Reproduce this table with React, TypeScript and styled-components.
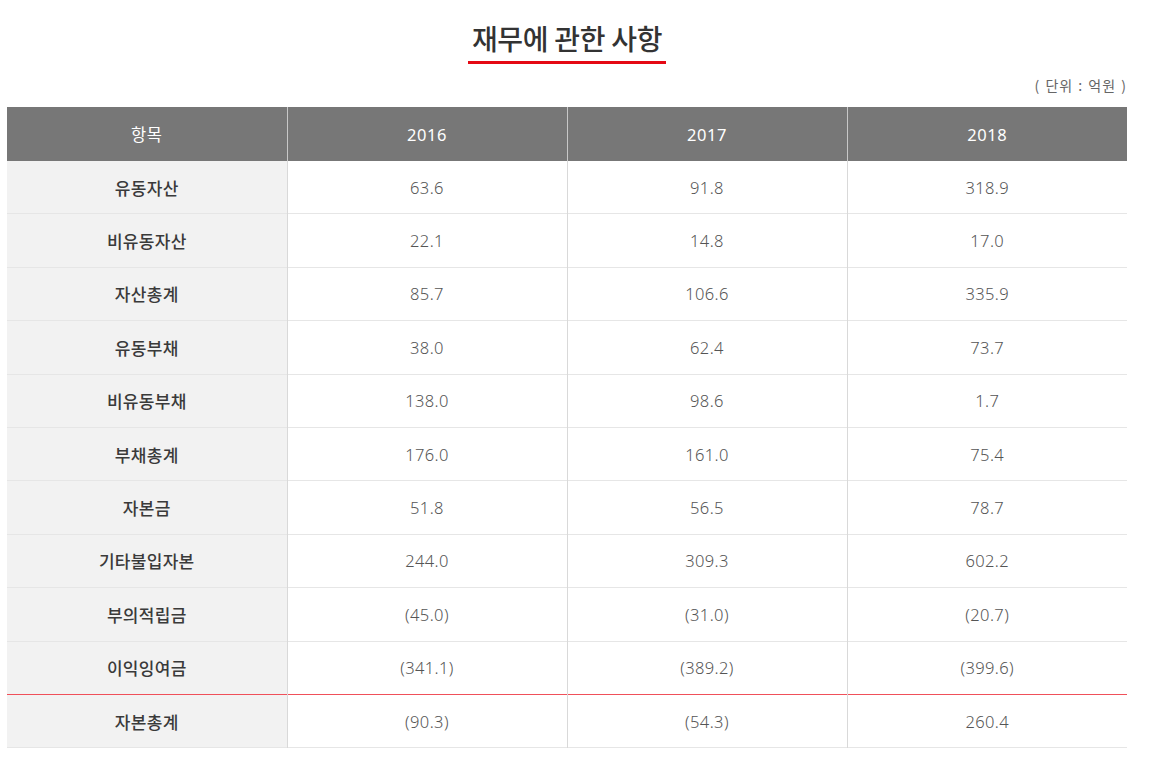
import styled, { createGlobalStyle } from "styled-components";

const GlobalStyle = createGlobalStyle`
  body {
    margin: 0;
    background: #fff;
    font-family: "Noto Sans CJK KR", "Noto Sans", sans-serif;
  }
`;

interface IRow {
  label: string;
  values: string[];
  total?: boolean;
}

const years = ["2016", "2017", "2018"];

const rows: IRow[] = [
  { label: "유동자산", values: ["63.6", "91.8", "318.9"] },
  { label: "비유동자산", values: ["22.1", "14.8", "17.0"] },
  { label: "자산총계", values: ["85.7", "106.6", "335.9"] },
  { label: "유동부채", values: ["38.0", "62.4", "73.7"] },
  { label: "비유동부채", values: ["138.0", "98.6", "1.7"] },
  { label: "부채총계", values: ["176.0", "161.0", "75.4"] },
  { label: "자본금", values: ["51.8", "56.5", "78.7"] },
  { label: "기타불입자본", values: ["244.0", "309.3", "602.2"] },
  { label: "부의적립금", values: ["(45.0)", "(31.0)", "(20.7)"] },
  { label: "이익잉여금", values: ["(341.1)", "(389.2)", "(399.6)"] },
  { label: "자본총계", values: ["(90.3)", "(54.3)", "260.4"], total: true },
];

export default function App() {
  return (
    <Page>
      <GlobalStyle />
      <TitleWrap>
        <Title>재무에 관한 사항</Title>
      </TitleWrap>
      <Unit>( 단위 : 억원 )</Unit>
      <Table>
        <colgroup>
          <col width="25%" />
          <col width="25%" />
          <col width="25%" />
          <col width="25%" />
        </colgroup>
        <thead>
          <tr>
            <HeadCell>항목</HeadCell>
            {years.map((y) => (
              <HeadCell key={y}>{y}</HeadCell>
            ))}
          </tr>
        </thead>
        <tbody>
          {rows.map((row) => (
            <BodyRow key={row.label} $total={row.total}>
              <LabelCell>{row.label}</LabelCell>
              {row.values.map((v, i) => (
                <ValueCell key={i}>{v}</ValueCell>
              ))}
            </BodyRow>
          ))}
        </tbody>
      </Table>
    </Page>
  );
}

const Page = styled.div`
  width: 1120px;
  margin-left: 7px;
  padding-top: 18px;
`;

const TitleWrap = styled.div`
  display: flex;
  justify-content: center;
`;

const Title = styled.h2`
  margin: 0;
  padding: 0 4px 3px;
  font-size: 28px;
  font-weight: 500;
  line-height: 40px;
  color: #333;
  letter-spacing: -0.3px;
  border-bottom: 3px solid #e50914;
`;

const Unit = styled.p`
  margin: 11px 0 0;
  text-align: right;
  font-size: 14px;
  line-height: 20px;
  letter-spacing: 1px;
  color: #666;
  word-spacing: 1px;
`;

const Table = styled.table`
  width: 100%;
  margin-top: 12px;
  border-collapse: collapse;
  table-layout: fixed;
`;

const HeadCell = styled.th`
  height: 54px;
  padding: 0;
  background: #777;
  color: #fff;
  font-family: "Noto Sans", "Noto Sans CJK KR", sans-serif;
  font-size: 16.5px;
  font-weight: 400;
  letter-spacing: 0.5px;
  text-align: center;
  border-left: 1px solid #c8c8c8;

  &:first-child {
    border-left: none;
  }
`;

const BodyRow = styled.tr<{ $total?: boolean }>`
  border-bottom: 1px solid #e6e6e6;

  td {
    border-top: ${({ $total }) => ($total ? "1px solid #f0505a" : "none")};
  }
`;

const LabelCell = styled.td`
  height: 52.4px;
  padding: 0;
  background: #f2f2f2;
  color: #3a3a3a;
  font-size: 17px;
  font-weight: 500;
  letter-spacing: 0.3px;
  text-align: center;
`;

const ValueCell = styled.td`
  height: 52.4px;
  padding: 0;
  color: #555;
  font-family: "Noto Sans", "Noto Sans CJK KR", sans-serif;
  font-size: 16.5px;
  font-weight: 300;
  letter-spacing: 0.4px;
  text-align: center;
  border-left: 1px solid #d9d9d9;
`;
